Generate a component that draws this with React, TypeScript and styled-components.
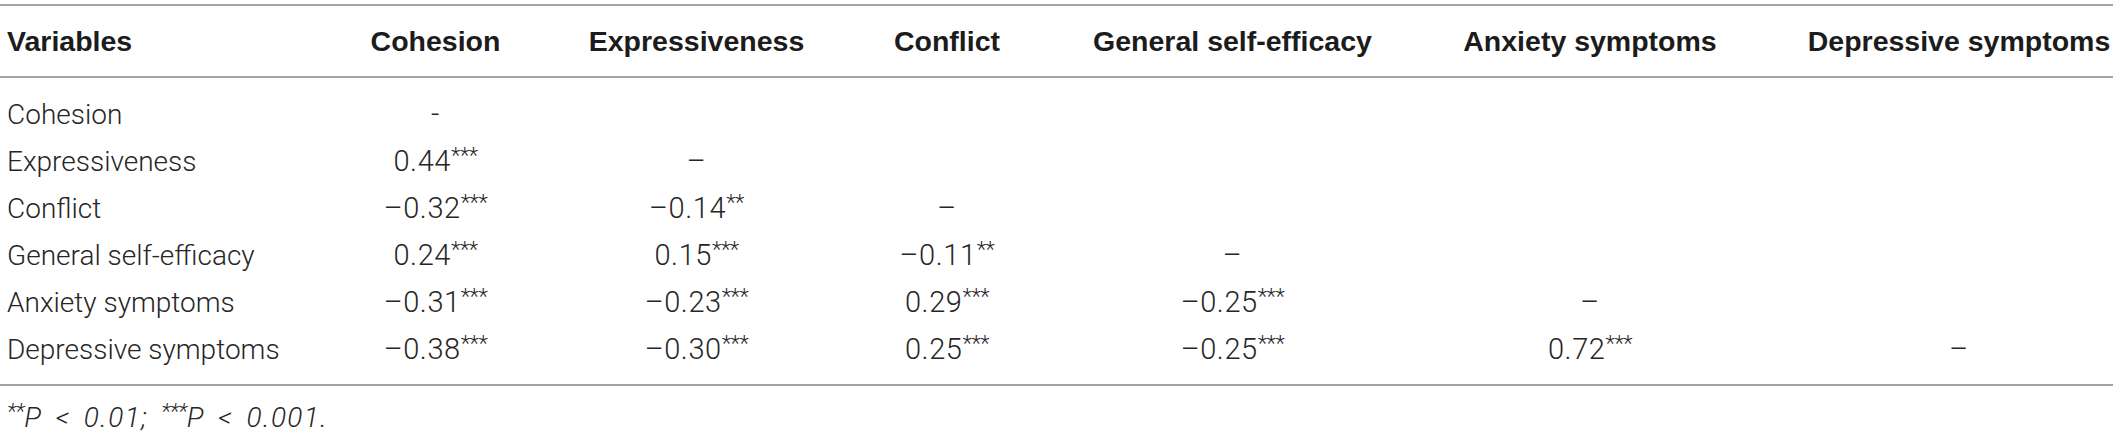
import React, { FC } from "react";
import styled, { createGlobalStyle } from "styled-components";

const GlobalStyle = createGlobalStyle`
    html, body {
        margin: 0;
        padding: 0;
        background: #ffffff;
    }
`

type Cell = { value: string, stars?: string }

// widths of each column, taken so that the header texts land where they are in the print
const columns = [326, 219, 303, 198, 373, 342, 352];

const headers = ["Variables", "Cohesion", "Expressiveness", "Conflict", "General self-efficacy", "Anxiety symptoms", "Depressive symptoms"];

const rows: { name: string, cells: Cell[] }[] = [
    { name: "Cohesion", cells: [{ value: "-" }] },
    { name: "Expressiveness", cells: [{ value: "0.44", stars: "***" }, { value: "–" }] },
    { name: "Conflict", cells: [{ value: "–0.32", stars: "***" }, { value: "–0.14", stars: "**" }, { value: "–" }] },
    { name: "General self-efficacy", cells: [{ value: "0.24", stars: "***" }, { value: "0.15", stars: "***" }, { value: "–0.11", stars: "**" }, { value: "–" }] },
    { name: "Anxiety symptoms", cells: [{ value: "–0.31", stars: "***" }, { value: "–0.23", stars: "***" }, { value: "0.29", stars: "***" }, { value: "–0.25", stars: "***" }, { value: "–" }] },
    { name: "Depressive symptoms", cells: [{ value: "–0.38", stars: "***" }, { value: "–0.30", stars: "***" }, { value: "0.25", stars: "***" }, { value: "–0.25", stars: "***" }, { value: "0.72", stars: "***" }, { value: "–" }] },
];

const Wrapper = styled.div`
    width: 2113px;
    padding-top: 4px;
`

const Table = styled.table`
    width: 2113px;
    table-layout: fixed;
    border-collapse: collapse;
    border-top: 2px solid #a3a3a3;
    border-bottom: 2px solid #a3a3a3;
`

const Col = styled.col<{ $w: number }>`
    width: ${p => p.$w}px;
`

const HeadRow = styled.tr`
    border-bottom: 2px solid #a3a3a3;
`

const Th = styled.th<{ $first?: boolean, $last?: boolean }>`
    height: 70px;
    padding: ${p => p.$first ? "0 0 0 7px" : p.$last ? "0 1px 0 45px" : "0"};
    text-align: ${p => p.$first ? "left" : "center"};
    font-family: "Liberation Sans", Arial, sans-serif;
    font-weight: 700;
    font-size: 28.5px;
    color: #1c1c1c;
    white-space: nowrap;
`

const Td = styled.td<{ $first?: boolean, $last?: boolean, $top?: boolean, $bottom?: boolean }>`
    height: 47px;
    padding: ${p => p.$top ? "13px" : "0"} ${p => p.$last ? "1px" : "0"} ${p => p.$bottom ? "11px" : "0"} ${p => p.$first ? "7px" : p.$last ? "45px" : "0"};
    text-align: ${p => p.$first ? "left" : "center"};
    font-family: Roboto, "Liberation Sans", sans-serif;
    font-weight: 300;
    font-size: ${p => p.$first ? "28px" : "29px"};
    letter-spacing: ${p => p.$first ? "0" : "0.6px"};
    line-height: 47px;
    color: #262626;
    white-space: nowrap;
`

const Stars = styled.sup`
    font-size: 22px;
    line-height: 0;
    vertical-align: 8px;
    letter-spacing: -0.5px;
`

const Note = styled.div`
    padding-left: 7px;
    margin-top: 17px;
    font-family: Roboto, "Liberation Sans", sans-serif;
    font-weight: 300;
    font-style: italic;
    font-size: 28px;
    line-height: 30px;
    letter-spacing: 1.4px;
    word-spacing: 5px;
    color: #262626;
`

const App = () => {
    return (
        <Wrapper>
            <GlobalStyle />
            <Table>
                <colgroup>
                    {columns.map((w, i) => <Col key={i} $w={w} />)}
                </colgroup>
                <thead>
                    <HeadRow>
                        {headers.map((h, i) => <Th key={h} $first={i === 0} $last={i === headers.length - 1}>{h}</Th>)}
                    </HeadRow>
                </thead>
                <tbody>
                    {rows.map((row, r) => (
                        <tr key={row.name}>
                            <Td $first $top={r === 0} $bottom={r === rows.length - 1}>{row.name}</Td>
                            {headers.slice(1).map((_, c) => {
                                const cell = row.cells[c];
                                return (
                                    <Td key={c} $last={c === headers.length - 2} $top={r === 0} $bottom={r === rows.length - 1}>
                                        {cell && <>{cell.value}{cell.stars && <Stars>{cell.stars}</Stars>}</>}
                                    </Td>
                                )
                            })}
                        </tr>
                    ))}
                </tbody>
            </Table>
            <Note><Stars>**</Stars>P &lt; 0.01; <Stars>***</Stars>P &lt; 0.001.</Note>
        </Wrapper>
    )
}

export default App;
